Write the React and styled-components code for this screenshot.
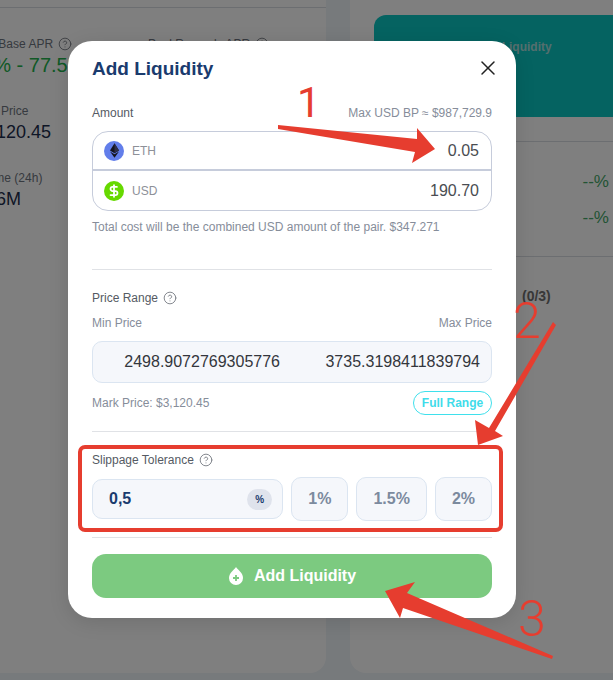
import React from "react";
import styled, { createGlobalStyle } from "styled-components";
import { CircleHelp, DollarSign, X } from "lucide-react";

const GlobalStyle = createGlobalStyle`
  html, body {
    margin: 0;
    padding: 0;
    background: #eff4f8;
  }
  * {
    box-sizing: border-box;
  }
`;

const Page = styled.div`
  position: relative;
  width: 613px;
  height: 680px;
  overflow: hidden;
  font-family: "Liberation Sans", Arial, sans-serif;
  background: #eff4f8;
`;

const Dashboard = styled.div`
  display: flex;
  gap: 24px;
  width: 613px;
  height: 673px;
`;

const LeftCard = styled.section`
  flex: 0 0 326px;
  min-width: 0;
  background: #fff;
  border-radius: 0 0 16px 0;
  padding-top: 7px;
`;

const TopRule = styled.div`
  height: 1px;
  background: #d8dde3;
`;

const StatGrid = styled.div`
  display: grid;
  grid-template-columns: 177px 177px;
  row-gap: 25px;
  margin: 27px 0 0 -29px;
`;

const Stat = styled.div`
  display: flex;
  flex-direction: column;
`;

const StatLabel = styled.div`
  display: flex;
  align-items: center;
  gap: 5px;
  height: 18px;
  font-size: 12px;
  color: #6d7480;
  white-space: nowrap;
`;

const StatValue = styled.div`
  font-size: ${(p) => p.$size || 18}px;
  line-height: 24px;
  color: ${(p) => (p.$green ? "#22b24c" : "#1c2c4c")};
  white-space: nowrap;
`;

const RightCard = styled.section`
  flex: 1;
  min-width: 0;
  background: #fff;
  border-radius: 0 0 0 16px;
  padding: 15px 0 0 24px;
`;

const Banner = styled.div`
  height: 102px;
  background: #0bc6c3;
  border-radius: 12px 0 0 0;
  padding: 25px 0 0 101px;
  font-size: 12px;
  font-weight: 700;
  line-height: 14px;
  color: #a9dedc;
`;

const CardRule = styled.div`
  height: 1px;
  margin-top: ${(p) => p.$top}px;
  background: #d8dde3;
`;

const ApyRow = styled.div`
  display: flex;
  justify-content: flex-end;
  margin-top: ${(p) => p.$top}px;
  padding-right: 4px;
  font-size: 17px;
  line-height: 18px;
  color: #45a868;
`;

const Positions = styled.div`
  margin-top: 31px;
  padding-left: 148px;
  font-size: 14px;
  font-weight: 700;
  line-height: 16px;
  color: #707070;
  white-space: nowrap;
`;

const Backdrop = styled.div`
  position: absolute;
  inset: 0;
  background: rgba(0, 0, 0, 0.5);
`;

const Modal = styled.div`
  position: absolute;
  left: 68px;
  top: 41px;
  width: 448px;
  padding: 0 24px 20px;
  background: #fff;
  border-radius: 24px;
  box-shadow: 0 4px 20px rgba(0, 0, 0, 0.12);
`;

const ModalHeader = styled.header`
  display: flex;
  align-items: center;
  justify-content: space-between;
  height: 54px;
`;

const Title = styled.h2`
  margin: 1px 0 0;
  font-size: 19px;
  font-weight: 700;
  color: #1a3b6e;
`;

const CloseButton = styled.button`
  display: flex;
  padding: 0;
  margin-right: -8px;
  border: none;
  background: none;
  color: #222;
`;

const LabelRow = styled.div`
  display: flex;
  align-items: center;
  justify-content: space-between;
  height: 18px;
  margin-top: ${(p) => p.$top}px;
  font-size: 12px;
  color: #555a63;
`;

const LabelGroup = styled.span`
  display: flex;
  align-items: center;
  gap: 5px;
`;

const Muted = styled.span`
  font-size: 12px;
  color: #868d9a;
`;

const AmountBox = styled.div`
  margin-top: 9px;
  height: 80px;
  border: 1px solid #c6ccdb;
  border-radius: 16px;
`;

const AmountRow = styled.div`
  display: flex;
  align-items: center;
  gap: 8px;
  height: 39px;
  padding: 0 12px 0 11px;
  border-bottom: ${(p) => (p.$first ? "2px solid #c6ccdb" : "none")};
`;

const TokenIcon = styled.span`
  display: flex;
  align-items: center;
  justify-content: center;
  width: 20px;
  height: 20px;
  border-radius: 50%;
  background: ${(p) => p.$bg};
  color: #fff;
`;

const TokenName = styled.span`
  font-size: 12px;
  color: #8d9098;
`;

const AmountValue = styled.span`
  margin-left: auto;
  font-size: 16px;
  color: #4a4d52;
`;

const Note = styled.p`
  margin: 8px 0 0;
  font-size: 12px;
  line-height: 16px;
  color: #868d9a;
`;

const Rule = styled.hr`
  margin: ${(p) => p.$top}px 0 0;
  height: 1px;
  border: none;
  background: #e0e2e6;
`;

const RangeBox = styled.div`
  display: grid;
  grid-template-columns: 200px 200px;
  margin-top: 9px;
  height: 42px;
  background: #f5f7fb;
  border: 1px solid #dbe5f1;
  border-radius: 10px;
`;

const RangeValue = styled.div`
  display: flex;
  align-items: center;
  justify-content: flex-end;
  padding-right: 13px;
  font-size: 16px;
  color: #33363c;
`;

const MarkRow = styled.div`
  display: flex;
  align-items: center;
  justify-content: space-between;
  margin-top: 8px;
  height: 24px;
`;

const FullRange = styled.button`
  height: 24px;
  width: 79px;
  padding: 0;
  border: 1px solid #3fe0ec;
  border-radius: 12px;
  background: #fff;
  color: #3fdcea;
  font-family: inherit;
  font-size: 12px;
  font-weight: 700;
`;

const SlippageRow = styled.div`
  display: flex;
  align-items: center;
  gap: 8px;
  margin-top: 8px;
  height: 44px;
`;

const SlippageInput = styled.div`
  flex: 1;
  display: flex;
  align-items: center;
  justify-content: space-between;
  height: 40px;
  padding: 0 10px 0 16px;
  background: #f5f7fb;
  border: 1px solid #dbe5f1;
  border-radius: 10px;
  font-size: 16px;
  font-weight: 700;
  color: #1a3b6e;
`;

const PercentChip = styled.span`
  display: flex;
  align-items: center;
  justify-content: center;
  width: 25px;
  height: 21px;
  border-radius: 11px;
  background: #dfe3ec;
  font-size: 10px;
  color: #1a3b6e;
`;

const SlippageOption = styled.button`
  height: 44px;
  padding: 0 16px;
  background: #f5f7fb;
  border: 1px solid #dbe5f1;
  border-radius: 10px;
  font-family: inherit;
  font-size: 16px;
  font-weight: 700;
  color: #7c8a9e;
`;

const SubmitButton = styled.button`
  display: flex;
  align-items: center;
  justify-content: center;
  gap: 10px;
  width: 100%;
  height: 44px;
  margin-top: 16px;
  border: none;
  border-radius: 14px;
  background: #7cca80;
  color: #fff;
  font-family: inherit;
  font-size: 16px;
  font-weight: 700;
`;

const Annotations = styled.svg`
  position: absolute;
  inset: 0;
  pointer-events: none;
`;

const StepNumber = styled.text`
  font-family: Roboto, "Liberation Sans", sans-serif;
  font-weight: ${(p) => p.$weight || 300};
  font-size: ${(p) => p.$size}px;
  fill: #e63d2f;
`;

const RED = "#e63d2f";

const arrows = [
  "278,125 417,139 417,128 435,149 412,163 415,152 278,129",
  "553,322 556,325 495,431 503,436 478,445 475,420 489,428",
  "385,591 415,582 407,593 553,656 552,659 403,608 400,618",
];

const Help = () => <CircleHelp size={14} strokeWidth={1.6} color="#7b7f86" />;

function EthIcon() {
  return (
    <svg width="9" height="15" viewBox="0 0 10 16">
      <path d="M5 0 L10 8 L5 11 L0 8 Z" fill="#14141f" />
      <path d="M0 9.2 L5 12.2 L10 9.2 L5 16 Z" fill="#14141f" />
      <path d="M5 0 L5 11 L10 8 Z" fill="#2d2d48" />
    </svg>
  );
}

function DropPlusIcon() {
  return (
    <svg width="16" height="18" viewBox="0 0 16 18">
      <path d="M8 0 C10 3 15 6 15 11 A7 7 0 0 1 1 11 C1 6 6 3 8 0 Z" fill="#fff" />
      <path d="M8 8 V14 M5 11 H11" stroke="#7cca80" strokeWidth="1.8" />
    </svg>
  );
}

function App() {
  return (
    <Page>
      <GlobalStyle />
      <Dashboard>
        <LeftCard>
          <TopRule />
          <StatGrid>
            <Stat>
              <StatLabel>
                Pool Base APR <Help />
              </StatLabel>
              <StatValue $size={20} $green>
                12% - 77.5%
              </StatValue>
            </Stat>
            <Stat>
              <StatLabel>
                Pool Rewards APR <Help />
              </StatLabel>
            </Stat>
            <Stat>
              <StatLabel>Mark Price</StatLabel>
              <StatValue>$3,120.45</StatValue>
            </Stat>
            <Stat />
            <Stat>
              <StatLabel>Volume (24h)</StatLabel>
              <StatValue>$1.6M</StatValue>
            </Stat>
          </StatGrid>
        </LeftCard>
        <RightCard>
          <Banner>Add Liquidity</Banner>
          <CardRule $top={24} />
          <ApyRow $top={31}>--%</ApyRow>
          <ApyRow $top={18}>--%</ApyRow>
          <CardRule $top={29} />
          <Positions>(0/3)</Positions>
        </RightCard>
      </Dashboard>
      <Backdrop />
      <Modal>
        <ModalHeader>
          <Title>Add Liquidity</Title>
          <CloseButton>
            <X size={24} strokeWidth={1.5} />
          </CloseButton>
        </ModalHeader>

        <LabelRow $top={9}>
          Amount
          <Muted>Max USD BP ≈ $987,729.9</Muted>
        </LabelRow>
        <AmountBox>
          <AmountRow $first>
            <TokenIcon $bg="#627eea">
              <EthIcon />
            </TokenIcon>
            <TokenName>ETH</TokenName>
            <AmountValue>0.05</AmountValue>
          </AmountRow>
          <AmountRow>
            <TokenIcon $bg="#66d900">
              <DollarSign size={14} strokeWidth={3} />
            </TokenIcon>
            <TokenName>USD</TokenName>
            <AmountValue>190.70</AmountValue>
          </AmountRow>
        </AmountBox>
        <Note>Total cost will be the combined USD amount of the pair. $347.271</Note>
        <Rule $top={34} />

        <LabelRow $top={19}>
          <LabelGroup>
            Price Range <Help />
          </LabelGroup>
        </LabelRow>
        <LabelRow $top={7}>
          <Muted>Min Price</Muted>
          <Muted>Max Price</Muted>
        </LabelRow>
        <RangeBox>
          <RangeValue>2498.9072769305776</RangeValue>
          <RangeValue>3735.3198411839794</RangeValue>
        </RangeBox>
        <MarkRow>
          <Muted>Mark Price: $3,120.45</Muted>
          <FullRange>Full Range</FullRange>
        </MarkRow>
        <Rule $top={16} />

        <LabelRow $top={19}>
          <LabelGroup>
            Slippage Tolerance <Help />
          </LabelGroup>
        </LabelRow>
        <SlippageRow>
          <SlippageInput>
            0,5
            <PercentChip>%</PercentChip>
          </SlippageInput>
          <SlippageOption>1%</SlippageOption>
          <SlippageOption>1.5%</SlippageOption>
          <SlippageOption>2%</SlippageOption>
        </SlippageRow>
        <Rule $top={16} />

        <SubmitButton>
          <DropPlusIcon />
          Add Liquidity
        </SubmitButton>
      </Modal>

      <Annotations width="613" height="680" viewBox="0 0 613 680">
        <rect x="80" y="447" width="421" height="83" rx="5" fill="none" stroke={RED} strokeWidth="4" />
        {arrows.map((points) => (
          <polygon key={points} points={points} fill={RED} />
        ))}
        <StepNumber x="297" y="117" $size={42} $weight={400}>1</StepNumber>
        <StepNumber x="513" y="338" $size={50}>2</StepNumber>
        <StepNumber x="518" y="636" $size={50}>3</StepNumber>
      </Annotations>
    </Page>
  );
}

export default App;
